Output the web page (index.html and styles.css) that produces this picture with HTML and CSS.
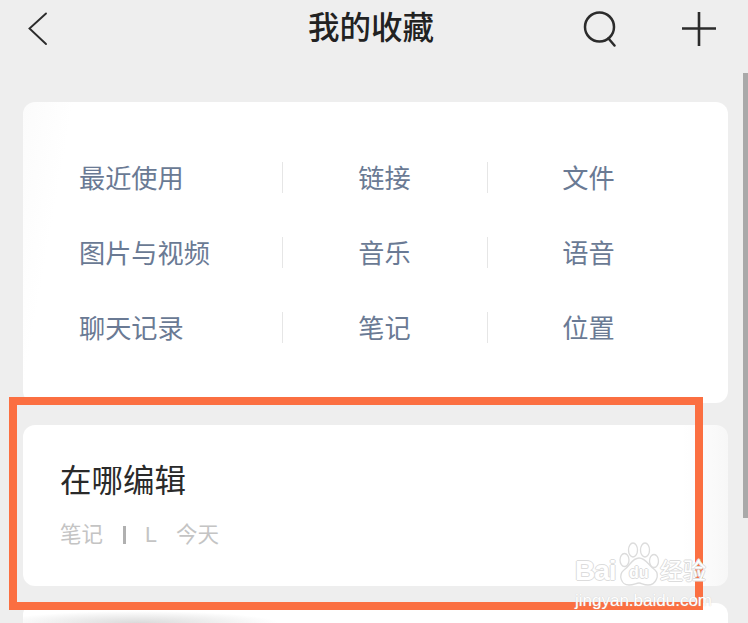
FILE: index.html
```html
<!DOCTYPE html>
<html lang="zh-CN">
<head>
    <meta charset="UTF-8">
    <title>我的收藏</title>
    <link rel="stylesheet" href="styles.css">
</head>
<body>
    <div class="page">
        <div class="header">
            <svg class="icon-back" width="24" height="36" viewBox="0 0 24 36">
                <path d="M21 2.5 L4.5 17.5 L21 33" fill="none" stroke="#2b2b2b" stroke-width="1.9" stroke-linecap="round"/>
            </svg>
            <div class="title">我的收藏</div>
            <svg class="icon-search" width="36" height="36" viewBox="0 0 36 36">
                <circle cx="17.5" cy="16" r="14.5" fill="none" stroke="#2b2b2b" stroke-width="2.5"/>
                <path d="M26.5 27.5 L32.5 34.5" fill="none" stroke="#2b2b2b" stroke-width="2.5" stroke-linecap="round"/>
            </svg>
            <svg class="icon-add" width="36" height="36" viewBox="0 0 36 36">
                <path d="M18 1 V35 M1 17.5 H35" fill="none" stroke="#2b2b2b" stroke-width="2.6"/>
            </svg>
        </div>

        <div class="card menu">
            <div class="menu-item first">最近使用</div>
            <div class="menu-item"><span class="sep"></span>链接</div>
            <div class="menu-item last"><span class="sep"></span>文件</div>
            <div class="menu-item first">图片与视频</div>
            <div class="menu-item"><span class="sep"></span>音乐</div>
            <div class="menu-item last"><span class="sep"></span>语音</div>
            <div class="menu-item first">聊天记录</div>
            <div class="menu-item"><span class="sep"></span>笔记</div>
            <div class="menu-item last"><span class="sep"></span>位置</div>
        </div>

        <div class="card note">
            <div class="note-title">在哪编辑</div>
            <div class="note-meta">
                <span>笔记</span>
                <span class="bar"></span>
                <span class="letter">L</span>
                <span>今天</span>
            </div>
        </div>

        <div class="card next"></div>

        <div class="highlight"></div>
        <div class="scrollbar"></div>

        <div class="watermark">
            <div class="wm-line">
                <span class="wm-bai">Bai</span>
                <div class="wm-paw">
                    <svg width="42" height="46" viewBox="0 0 42 46">
                        <g fill="none" stroke="#dcdcdc" stroke-width="1.3">
                            <ellipse cx="6.5" cy="19" rx="4.5" ry="6.5"/>
                            <ellipse cx="15" cy="9" rx="4.5" ry="7"/>
                            <ellipse cx="27" cy="9" rx="4.5" ry="7"/>
                            <ellipse cx="36" cy="20" rx="4.5" ry="6.5"/>
                            <path d="M21 17 C28 17 30 24 37 29 C42 34 38 44 30 44 C25 44 24 42 21 42 C18 42 16 44 11 44 C3 44 0 34 6 29 C12 25 14 17 21 17 Z"/>
                        </g>
                    </svg>
                    <span class="wm-du">du</span>
                </div>
                <span class="wm-cn">经验</span>
            </div>
            <div class="wm-url">jingyan.baidu.com</div>
        </div>
    </div>
</body>
</html>
```

FILE: styles.css
```css
html, body {
    margin: 0;
    padding: 0;
}
body {
    background-color: #eeeeee;
    font-family: "Liberation Sans", "Noto Sans CJK SC", sans-serif;
}
.page {
    position: relative;
    width: 748px;
    height: 623px;
    overflow: hidden;
    background-color: #eeeeee;
}
.header {
    display: flex;
    align-items: center;
    height: 58px;
    padding: 0 31px 0 25px;
    margin-bottom: 44px;
}
.icon-back {
    margin-right: 259px;
}
.title {
    font-size: 31.5px;
    font-weight: 500;
    line-height: 56px;
    height: 58px;
    color: #222222;
    width: 126px;
    white-space: nowrap;
}
.icon-search {
    margin-left: 148px;
}
.icon-add {
    margin-left: 63px;
}
.card {
    margin: 0 20px 0 23px;
    background-color: #ffffff;
    border-radius: 12px;
}
.menu {
    display: grid;
    grid-template-columns: 259px 205px 205px;
    grid-auto-rows: 75px;
    height: 225px;
    padding: 38px 0;
    margin-bottom: 22px;
    background: linear-gradient(100deg, #fbfbfb, #ffffff 50px);
}
.menu-item {
    position: relative;
    display: flex;
    align-items: center;
    justify-content: center;
    box-sizing: border-box;
    padding-bottom: 2px;
    font-size: 26.2px;
    color: #6a7a94;
    white-space: nowrap;
}
.menu-item.first {
    justify-content: flex-start;
    padding-left: 56px;
}
.menu-item.last {
    padding-right: 2px;
}
.sep {
    position: absolute;
    left: 0;
    top: 22px;
    width: 1px;
    height: 31px;
    background-color: #e6e6e6;
}
.note {
    height: 161px;
    box-sizing: border-box;
    padding: 36px 0 0 37px;
    margin-bottom: 17px;
    background: linear-gradient(90deg, #ffffff 660px, #f7f7f7);
}
.note-title {
    font-size: 31.5px;
    line-height: 40px;
    color: #2a2a2a;
}
.note-meta {
    display: flex;
    align-items: center;
    margin-top: 20px;
    font-size: 21.5px;
    line-height: 28px;
    color: #c4c4c4;
}
.bar {
    width: 3px;
    height: 18px;
    margin: 0 19px 0 20px;
    background-color: #b0b0b0;
}
.letter {
    margin-right: 19px;
}
.next {
    height: 60px;
    background: radial-gradient(ellipse 140px 12px at 115px 20px, #dadada, #ffffff);
}
.highlight {
    position: absolute;
    left: 9px;
    top: 397px;
    width: 678px;
    height: 197px;
    border: 8px solid #fb6f41;
}
.scrollbar {
    position: absolute;
    left: 743px;
    top: 73px;
    width: 5px;
    height: 445px;
    background-color: #a9a9a9;
}
.watermark {
    position: absolute;
    left: 575px;
    top: 541px;
    width: 136px;
    color: #ffffff;
    text-shadow: 1px 0 0 #dcdcdc, -1px 0 0 #dcdcdc, 0 1px 0 #dcdcdc, 0 -1px 0 #dcdcdc;
}
.wm-line {
    display: flex;
    align-items: flex-end;
    height: 46px;
}
.wm-bai {
    font-size: 28px;
    font-weight: 700;
    line-height: 32px;
    letter-spacing: -1px;
    width: 43px;
}
.wm-paw {
    position: relative;
    width: 42px;
    height: 46px;
}
.wm-du {
    position: absolute;
    left: 11px;
    top: 22px;
    font-size: 16px;
    font-weight: 700;
    line-height: 20px;
}
.wm-cn {
    font-size: 23px;
    line-height: 32px;
    white-space: nowrap;
}
.wm-url {
    margin-top: 4px;
    font-size: 17px;
    line-height: 20px;
    white-space: nowrap;
    text-shadow: 0 0 1px #c4c4c4;
}
```
